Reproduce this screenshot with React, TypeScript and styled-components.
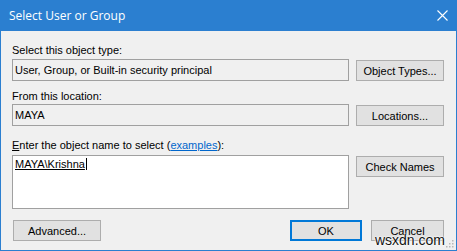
import React from "react";
import styled, { createGlobalStyle } from "styled-components";

const Global = createGlobalStyle`
  html, body { margin: 0; padding: 0; background: #ffffff; }
  * { box-sizing: border-box; }
`;

const Window = styled.div`
  position: relative;
  width: 457px;
  height: 251px;
  border: 1px solid #2b7fd0;
  border-top: none;
  background: #f0f0f0;
  display: flex;
  flex-direction: column;
  font-family: "Liberation Sans", Arial, sans-serif;
  font-size: 11px;
  color: #000;
  overflow: hidden;
`;

const TitleBar = styled.div`
  height: 31px;
  margin: 0 -1px;
  background: #2b7fd0;
  color: #fff;
  display: flex;
  align-items: center;
  justify-content: space-between;
  padding: 0 9px 1px 9px;
  font-family: "Open Sans", "Noto Sans", sans-serif;
  font-size: 12px;
`;

const CloseButton = styled.div`
  width: 11px;
  height: 11px;
  display: flex;
`;

const Body = styled.div`
  flex: 1;
  display: flex;
  flex-direction: column;
  padding: 0 12px 0 11px;
`;

const Label = styled.div<{ $top: number }>`
  margin-top: ${(p) => p.$top}px;
  height: 13px;
  line-height: 13px;
  white-space: nowrap;
`;

const Row = styled.div<{ $top: number; $height: number }>`
  margin-top: ${(p) => p.$top}px;
  height: ${(p) => p.$height}px;
  display: flex;
  align-items: flex-start;
  gap: 7px;
`;

const Field = styled.div<{ $readOnly?: boolean }>`
  width: 337px;
  height: 100%;
  border: 1px solid #a0a0a0;
  background: ${(p) => (p.$readOnly ? "#f0f0f0" : "#ffffff")};
  padding: ${(p) => (p.$readOnly ? "4px 2px" : "2px 2px")};
  line-height: 13px;
  white-space: nowrap;
`;

const Button = styled.div<{ $width: number; $default?: boolean }>`
  width: ${(p) => p.$width}px;
  height: 21px;
  margin-top: 1px;
  background: #e1e1e1;
  border: ${(p) => (p.$default ? "2px solid #0078d7" : "1px solid #adadad")};
  display: flex;
  align-items: center;
  justify-content: center;
  white-space: nowrap;
`;

const Footer = styled.div`
  margin-top: 10px;
  display: flex;
  align-items: center;
  padding-left: 1px;
`;

const Spacer = styled.div`
  flex: 1;
`;

const FooterGroup = styled.div`
  display: flex;
  gap: 9px;
`;

const AccessKey = styled.span`
  text-decoration: underline;
`;

const Link = styled.span`
  color: #0066cc;
  text-decoration: underline;
`;

const ResolvedName = styled.span`
  text-decoration: underline;
  border-right: 1px solid #000;
  padding-right: 1px;
`;

const Watermark = styled.span`
  position: absolute;
  right: 11px;
  bottom: 3px;
  font-family: "Liberation Sans", Arial, sans-serif;
  font-size: 14px;
  line-height: 14px;
  color: #111;
  text-shadow: 0 0 2px #fff, 0 0 2px #fff, 0 0 1px #fff;
`;

const Grip = styled.svg`
  position: absolute;
  right: 2px;
  bottom: 2px;
`;

export default function App() {
  return (
    <>
      <Global />
      <Window>
        <TitleBar>
          <span>Select User or Group</span>
          <CloseButton>
            <svg width="11" height="11" viewBox="0 0 11 11">
              <path d="M0.5 0.5 L10.5 10.5 M10.5 0.5 L0.5 10.5" stroke="#fff" strokeWidth="1.1" />
            </svg>
          </CloseButton>
        </TitleBar>
        <Body>
          <Label $top={13}>Select this object type:</Label>
          <Row $top={2} $height={22}>
            <Field $readOnly>User, Group, or Built-in security principal</Field>
            <Button $width={88}>Object Types...</Button>
          </Row>
          <Label $top={9}>From this location:</Label>
          <Row $top={1} $height={22}>
            <Field $readOnly>MAYA</Field>
            <Button $width={88}>Locations...</Button>
          </Row>
          <Label $top={13}>
            <AccessKey>E</AccessKey>nter the object name to select (<Link>examples</Link>):
          </Label>
          <Row $top={3} $height={54}>
            <Field>
              <ResolvedName>MAYA\Krishna</ResolvedName>
            </Field>
            <Button $width={88}>Check Names</Button>
          </Row>
          <Footer>
            <Button $width={88}>Advanced...</Button>
            <Spacer />
            <FooterGroup>
              <Button $width={72} $default>
                OK
              </Button>
              <Button $width={73}>Cancel</Button>
            </FooterGroup>
          </Footer>
        </Body>
        <Watermark>wsxdn.com</Watermark>
        <Grip width="10" height="10" viewBox="0 0 10 10">
          {[
            [8, 2],
            [5, 5],
            [8, 5],
            [2, 8],
            [5, 8],
            [8, 8],
          ].map(([x, y]) => (
            <rect key={`${x}-${y}`} x={x} y={y} width="1.5" height="1.5" fill="#b8b8b8" />
          ))}
        </Grip>
      </Window>
    </>
  );
}
